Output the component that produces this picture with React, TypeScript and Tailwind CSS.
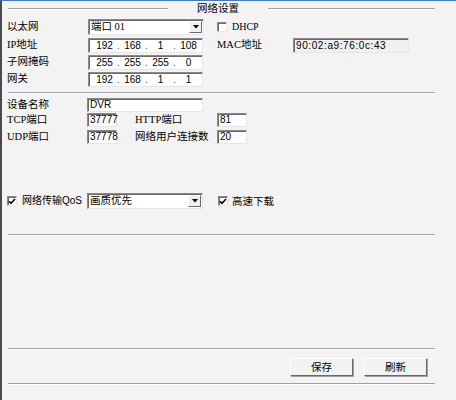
import React from "react";

const LABEL_FONT = { fontFamily: '"Liberation Serif", "Noto Sans CJK SC", serif' };
const FIELD_FONT = { fontFamily: '"Liberation Sans", "Noto Sans CJK SC", sans-serif' };

const sunken =
  "border border-t-[#8a8a8a] border-l-[#8a8a8a] border-b-[#e6e6e6] border-r-[#e6e6e6] shadow-[inset_1px_1px_0_#6a6a6a]";

function Line() {
  return <div className="h-[2px] border-t border-[#a0a0a0] border-b border-b-white" />;
}

function Label({ children, w = "w-[81px]" }: { children: React.ReactNode; w?: string }) {
  return (
    <span className={`${w} shrink-0 whitespace-nowrap text-[10.5px] leading-none text-black`} style={LABEL_FONT}>
      {children}
    </span>
  );
}

function Field({ value, w, h = "h-[15px]", bg = "bg-white" }: { value: string; w: string; h?: string; bg?: string }) {
  return (
    <div
      className={`${w} ${h} ${bg} ${sunken} flex items-center pl-[2px] text-[10px] leading-none text-black`}
      style={FIELD_FONT}
    >
      {value}
    </div>
  );
}

function IpField({ parts }: { parts: string[] }) {
  return (
    <div className={`w-[115px] h-[15px] bg-white ${sunken} flex items-center text-[10px] leading-none`} style={FIELD_FONT}>
      {parts.map((p, i) => (
        <div key={i} className="w-[28px] flex items-center">
          <span className="w-[3px] text-[#555]">{i > 0 ? "." : ""}</span>
          <span className="flex-1 text-center">{p}</span>
        </div>
      ))}
    </div>
  );
}

function Select({ value, w }: { value: string; w: string }) {
  return (
    <div className={`${w} h-[16px] bg-white ${sunken} flex items-center justify-between pl-[2px] pr-[1px]`}>
      <span className="text-[10.5px] leading-none text-black" style={LABEL_FONT}>
        {value}
      </span>
      <div className="w-[13px] h-[12px] bg-[#f0f0f0] border border-t-white border-l-white border-b-[#6a6a6a] border-r-[#6a6a6a] flex items-center justify-center">
        <svg width="6" height="4" viewBox="0 0 6 4">
          <path d="M0 0h6L3 3.5z" fill="#000" />
        </svg>
      </div>
    </div>
  );
}

function Check({ checked }: { checked?: boolean }) {
  return (
    <div className={`w-[10px] h-[10px] bg-white ${sunken} flex items-center justify-center shrink-0`}>
      {checked && (
        <svg width="8" height="7" viewBox="0 0 8 7">
          <path d="M1 3.2l2 2.2L7 1" stroke="#000" strokeWidth="1.6" fill="none" />
        </svg>
      )}
    </div>
  );
}

function Button({ children }: { children: React.ReactNode }) {
  return (
    <button
      className="w-[63px] h-[18px] bg-[#f2f2f2] border border-t-white border-l-white border-b-[#6a6a6a] border-r-[#6a6a6a] shadow-[1px_1px_0_#a0a0a0] flex items-center justify-center text-[10.5px] leading-none text-black"
      style={FIELD_FONT}
    >
      {children}
    </button>
  );
}

export default function App() {
  return (
    <div className="w-[456px] h-[400px] overflow-hidden bg-[#f3f3f3] border-t border-t-[#4a78b0] border-l-2 border-l-[#4a4a4a]">
      <div className="pl-[5px] pr-[21px] flex flex-col">
        {/* title */}
        <div className="h-[16px] flex items-center">
          <div className="w-[161px] pl-[1px]">
            <Line />
          </div>
          <span className="w-[100px] text-center text-[10.5px] leading-none text-black" style={LABEL_FONT}>
            网络设置
          </span>
          <div className="flex-1">
            <Line />
          </div>
        </div>

        {/* ethernet */}
        <div className="mt-[2px] h-[16px] flex items-center">
          <Label>以太网</Label>
          <Select value="端口 01" w="w-[116px]" />
          <div className="ml-[13px] flex items-center gap-[5px]">
            <Check />
            <span className="text-[10px] leading-none" style={LABEL_FONT}>
              DHCP
            </span>
          </div>
        </div>

        <div className="mt-[3px] h-[15px] flex items-center">
          <Label>IP地址</Label>
          <IpField parts={["192", "168", "1", "108"]} />
          <Label w="ml-[14px] w-[76px]">MAC地址</Label>
          <Field value="90:02:a9:76:0c:43" w="w-[116px] tracking-[0.6px]" bg="bg-[#f0f0f0]" />
        </div>

        <div className="mt-[2px] h-[15px] flex items-center">
          <Label>子网掩码</Label>
          <IpField parts={["255", "255", "255", "0"]} />
        </div>

        <div className="mt-[2px] h-[15px] flex items-center">
          <Label>网关</Label>
          <IpField parts={["192", "168", "1", "1"]} />
        </div>

        <div className="mt-[5px] pl-[1px]">
          <Line />
        </div>

        {/* device */}
        <div className="mt-[4px] h-[14px] flex items-center">
          <Label w="w-[80px]">设备名称</Label>
          <Field value="DVR" w="w-[116px]" h="h-[14px]" />
        </div>

        <div className="mt-[1px] h-[14px] flex items-center">
          <Label w="w-[80px]">TCP端口</Label>
          <Field value="37777" w="w-[30px]" h="h-[14px]" />
          <Label w="ml-[18px] w-[82px]">HTTP端口</Label>
          <Field value="81" w="w-[30px]" h="h-[14px]" />
        </div>

        <div className="mt-[3px] h-[14px] flex items-center">
          <Label w="w-[80px]">UDP端口</Label>
          <Field value="37778" w="w-[30px]" h="h-[14px]" />
          <Label w="ml-[18px] w-[82px]">网络用户连接数</Label>
          <Field value="20" w="w-[30px]" h="h-[14px]" />
        </div>

        {/* qos */}
        <div className="mt-[49px] h-[16px] flex items-center">
          <div className="w-[80px] shrink-0 flex items-center gap-[5px]">
            <Check checked />
            <span className="whitespace-nowrap text-[10px] leading-none" style={FIELD_FONT}>
              网络传输QoS
            </span>
          </div>
          <Select value="画质优先" w="w-[116px]" />
          <div className="ml-[15px] flex items-center gap-[4px]">
            <Check checked />
            <span className="text-[10.5px] leading-none" style={FIELD_FONT}>
              高速下载
            </span>
          </div>
        </div>

        <div className="mt-[25px] pl-[1px]">
          <Line />
        </div>

        <div className="mt-[112px] pl-[1px]">
          <Line />
        </div>

        <div className="mt-[8px] pr-[8px] flex justify-end gap-[11px]">
          <Button>保存</Button>
          <Button>刷新</Button>
        </div>

        <div className="mt-[7px] pl-[1px]">
          <Line />
        </div>
      </div>
    </div>
  );
}
